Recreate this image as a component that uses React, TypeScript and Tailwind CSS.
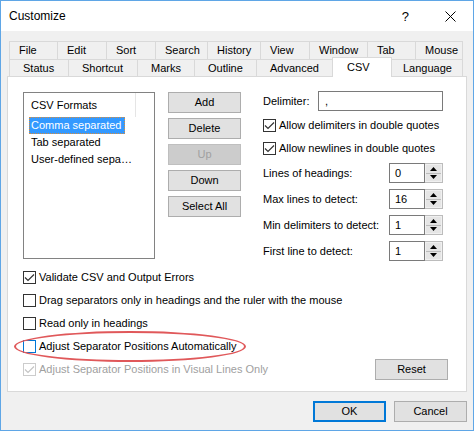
import React from 'react';

const row1 = [
  { label: 'File', w: 'w-[48px]' },
  { label: 'Edit', w: 'w-[49px]' },
  { label: 'Sort', w: 'w-[49px]' },
  { label: 'Search', w: 'w-[52px]' },
  { label: 'History', w: 'w-[53px]' },
  { label: 'View', w: 'w-[49px]' },
  { label: 'Window', w: 'w-[58px]' },
  { label: 'Tab', w: 'w-[48px]' },
  { label: 'Mouse', w: 'w-[48px]' },
];

const row2 = [
  { label: 'Status', w: 'w-[59px]' },
  { label: 'Shortcut', w: 'w-[69px]' },
  { label: 'Marks', w: 'w-[57px]' },
  { label: 'Outline', w: 'w-[62px]' },
  { label: 'Advanced', w: 'w-[76px]' },
  { label: 'CSV', w: 'w-[60px]', active: true },
  { label: 'Language', w: 'w-[71px]' },
];

function Check({ checked = false, disabled = false, focus = false }: { checked?: boolean; disabled?: boolean; focus?: boolean }) {
  const border = disabled ? 'border-[#cccccc]' : focus ? 'border-[#0078d7]' : 'border-[#333333]';
  return (
    <span className={`flex h-[13px] w-[13px] shrink-0 items-center justify-center border bg-white ${border}`}>
      {checked && (
        <svg width="11" height="11" viewBox="0 0 11 11">
          <path d="M1 5.5 L4 8.5 L10 2.5" fill="none" stroke={disabled ? '#c4c4c4' : '#333333'} strokeWidth="1.2" />
        </svg>
      )}
    </span>
  );
}

function CheckRow({ label, checked, disabled, focus }: { label: string; checked?: boolean; disabled?: boolean; focus?: boolean }) {
  return (
    <div className="flex h-[23px] items-center gap-[3px] whitespace-nowrap">
      <Check checked={checked} disabled={disabled} focus={focus} />
      <span className={disabled ? 'text-[#a0a0a0]' : 'text-black'}>{label}</span>
    </div>
  );
}

function Button({ label, disabled = false, className = '' }: { label: string; disabled?: boolean; className?: string }) {
  return (
    <div
      className={`flex h-[21px] w-[73px] items-center justify-center border ${
        disabled ? 'border-[#bfbfbf] bg-[#cccccc] text-[#a0a0a0]' : 'border-[#adadad] bg-[#e1e1e1] text-black'
      } ${className}`}
    >
      {label}
    </div>
  );
}

function Spin({ label, value }: { label: string; value: string }) {
  return (
    <div className="flex h-[26px] items-center justify-between whitespace-nowrap">
      <span>{label}</span>
      <div className="flex h-[20px] w-[54px]">
        <div className="flex flex-1 items-center border border-[#7a7a7a] bg-white pl-[5px]">{value}</div>
        <div className="flex w-[18px] flex-col border border-l-0 border-[#bcbcbc] bg-[#f0f0f0] p-px">
          <div className="flex flex-1 items-center justify-center border-b border-[#bcbcbc] bg-[#e5e5e5]">
            <svg width="7" height="4" viewBox="0 0 7 4"><path d="M3.5 0 L7 4 L0 4 Z" fill="#000" /></svg>
          </div>
          <div className="flex flex-1 items-center justify-center bg-[#e5e5e5]">
            <svg width="7" height="4" viewBox="0 0 7 4"><path d="M0 0 L7 0 L3.5 4 Z" fill="#000" /></svg>
          </div>
        </div>
      </div>
    </div>
  );
}

export default function App() {
  return (
    <div
      className="flex h-[431px] w-[474px] flex-col border border-[#5fa6e6] bg-[#f0f0f0] text-[11px] leading-none text-black"
      style={{ fontFamily: '"Liberation Sans", Arial, sans-serif' }}
    >
      {/* title bar */}
      <div className="flex h-[30px] items-center bg-white">
        <span className="pl-[8px] text-[12px]">Customize</span>
        <span className="ml-auto mr-[36px] text-[13px]">?</span>
        <svg className="mr-[17px]" width="11" height="11" viewBox="0 0 11 11">
          <path d="M0.5 0.5 L10.5 10.5 M10.5 0.5 L0.5 10.5" stroke="#000" strokeWidth="1" />
        </svg>
      </div>

      <div className="flex flex-1 flex-col px-[6px] pt-[10px]">
        {/* tabs */}
        <div className="mx-[2px] flex flex-col">
          <div className="flex h-[18px]">
            {row1.map((t, i) => (
              <div
                key={t.label}
                className={`${t.w} flex items-center border-t border-l border-[#d9d9d9] pl-[9px] ${i === row1.length - 1 ? 'border-r' : ''}`}
              >
                {t.label}
              </div>
            ))}
          </div>
          <div className="flex h-[17px] items-end">
            {row2.map((t, i) =>
              t.active ? (
                <div
                  key={t.label}
                  className={`${t.w} relative z-10 -mb-px flex h-[20px] items-start border border-b-0 border-[#d9d9d9] bg-white pl-[14px] pt-[4px]`}
                >
                  {t.label}
                </div>
              ) : (
                <div
                  key={t.label}
                  className={`${t.w} flex h-[17px] items-center border-t border-l border-[#d9d9d9] ${
                    i === row2.length - 1 ? 'border-r pl-[11px]' : 'pl-[13px]'
                  } ${row2[i - 1]?.active ? 'border-l-0' : ''}`}
                >
                  {t.label}
                </div>
              )
            )}
          </div>
        </div>

        {/* panel */}
        <div className="flex h-[316px] flex-col border border-[#d9d9d9] bg-white px-[15px] pt-[15px]">
          <div className="flex">
            {/* list box */}
            <div className="flex h-[167px] w-[132px] flex-col border border-[#828282] bg-white">
              <div className="flex h-[24px] items-center">
                <span className="flex h-full w-[112px] items-center border-r border-[#e5e5e5] pl-[7px]">CSV Formats</span>
              </div>
              <div className="flex flex-col px-[5px] whitespace-nowrap">
                <div className="flex h-[17px] w-[96px] items-center border border-dotted border-[#d98c3a] bg-[#3399ff] pl-[1px] text-white">
                  Comma separated
                </div>
                <div className="flex h-[17px] items-center pl-[2px]">Tab separated</div>
                <div className="flex h-[17px] items-center pl-[2px]">User-defined sepa…</div>
              </div>
            </div>

            {/* buttons */}
            <div className="ml-[13px] flex flex-col gap-[5px]">
              <Button label="Add" />
              <Button label="Delete" />
              <Button label="Up" disabled />
              <Button label="Down" />
              <Button label="Select All" />
            </div>

            {/* options */}
            <div className="-mt-px ml-[22px] flex w-[180px] flex-col">
              <div className="flex h-[20px] items-center justify-between">
                <span>Delimiter:</span>
                <div className="flex h-[20px] w-[125px] items-center border border-[#7a7a7a] bg-white pl-[6px]">,</div>
              </div>
              <div className="mt-[3px] flex flex-col">
                <CheckRow label="Allow delimiters in double quotes" checked />
                <CheckRow label="Allow newlines in double quotes" checked />
              </div>
              <div className="flex flex-col">
                <Spin label="Lines of headings:" value="0" />
                <Spin label="Max lines to detect:" value="16" />
                <Spin label="Min delimiters to detect:" value="1" />
                <Spin label="First line to detect:" value="1" />
              </div>
            </div>
          </div>

          <div className="mt-[2px] flex flex-col">
            <CheckRow label="Validate CSV and Output Errors" checked />
            <CheckRow label="Drag separators only in headings and the ruler with the mouse" />
            <CheckRow label="Read only in headings" />
            <div className="relative">
              <CheckRow label="Adjust Separator Positions Automatically" focus />
              {/* highlight ellipse */}
              <div className="pointer-events-none absolute -left-[9px] -top-[4px] h-[31px] w-[232px] rounded-[50%] border-2 border-[#e0585a]" />
            </div>
            <div className="flex items-center justify-between pr-[3px]">
              <CheckRow label="Adjust Separator Positions in Visual Lines Only" checked disabled />
              <Button label="Reset" />
            </div>
          </div>
        </div>

        {/* footer */}
        <div className="mt-[9px] flex justify-end gap-[8px]">
          <div className="flex h-[21px] w-[73px] items-center justify-center border-2 border-[#0078d7] bg-[#e1e1e1]">OK</div>
          <Button label="Cancel" />
        </div>
      </div>
    </div>
  );
}
